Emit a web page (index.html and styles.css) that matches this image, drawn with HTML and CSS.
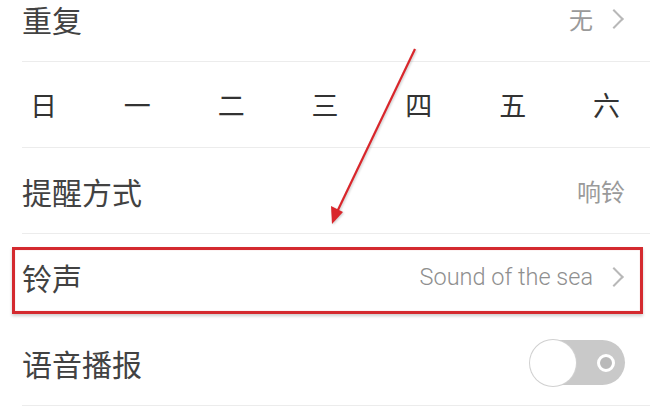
FILE: index.html
```html
<!DOCTYPE html>
<html>
<head>
  <title>闹钟设置</title>
  <link rel="stylesheet" href="styles.css">
  <meta name="viewport" content="width=device-width, initial-scale=1.0">
</head>
<body>
  <div class="settings">
    <div class="row">
      <span class="label">重复</span>
      <span class="value">无<span class="chevron"></span></span>
    </div>
    <div class="row weekdays">
      <span>日</span>
      <span>一</span>
      <span>二</span>
      <span>三</span>
      <span>四</span>
      <span>五</span>
      <span>六</span>
    </div>
    <div class="row">
      <span class="label">提醒方式</span>
      <span class="value">响铃</span>
    </div>
    <div class="row highlight no-line">
      <span class="label">铃声</span>
      <span class="value latin">Sound of the sea<span class="chevron"></span></span>
    </div>
    <div class="row">
      <span class="label">语音播报</span>
      <span class="switch"><span class="knob"></span><span class="dot"></span></span>
    </div>
  </div>

  <!-- annotation arrow -->
  <svg class="arrow" width="650" height="411" viewBox="0 0 650 411">
    <line x1="415" y1="49" x2="337" y2="212" stroke="#d9262b" stroke-width="2.2" />
    <polygon points="332,224 331,206 343,212" fill="#d9262b" />
  </svg>
</body>
</html>
```

FILE: styles.css
```css
body {
  margin: 0;
  background-color: #ffffff;
  font-family: "Noto Sans CJK SC", "Noto Sans", sans-serif;
  overflow: hidden;
}
.settings {
  margin-top: -24px;
}
.row {
  height: 85px;
  margin-left: 22px;
  padding-right: 25px;
  border-bottom: 1px solid #ececec;
  display: flex;
  align-items: center;
  justify-content: space-between;
  position: relative;
}
.row.no-line {
  border-bottom-color: transparent;
}
.label {
  font-size: 30px;
  color: #424242;
}
.value {
  font-size: 24px;
  color: #9a9a9a;
  display: flex;
  align-items: center;
}
.value.latin {
  font-family: Roboto, "Noto Sans", sans-serif;
  font-weight: 300;
  font-size: 23.5px;
  color: #8f8f8f;
}
.chevron {
  width: 12px;
  height: 12px;
  border-top: 2px solid #b8b8b8;
  border-right: 2px solid #b8b8b8;
  transform: rotate(45deg);
  margin-left: 14px;
  margin-right: 4px;
}
.weekdays {
  padding-left: 8px;
  padding-right: 30px;
  font-size: 27px;
  color: #333333;
}
.highlight::after {
  content: "";
  position: absolute;
  left: -10px;
  right: 7px;
  top: 13px;
  bottom: 5px;
  border: 3px solid #d42a2f;
  box-shadow: 0 2px 3px rgba(0, 0, 0, 0.2), inset 0 0 1px rgba(212, 42, 47, 0.5);
}
.switch {
  width: 95px;
  height: 45px;
  border-radius: 23px;
  background-color: #c9c9c9;
  display: flex;
  align-items: center;
  justify-content: space-between;
  box-sizing: border-box;
  padding-right: 10px;
}
.knob {
  width: 46px;
  height: 46px;
  border-radius: 50%;
  background-color: #ffffff;
  box-shadow: 0 0 0 1px #d0d0d0;
}
.dot {
  width: 12px;
  height: 12px;
  border-radius: 50%;
  border: 3px solid #ffffff;
  background-color: #b9b9b9;
}
.arrow {
  position: absolute;
  left: 0;
  top: 0;
  filter: drop-shadow(1px 1px 1px rgba(0, 0, 0, 0.2));
}
```
